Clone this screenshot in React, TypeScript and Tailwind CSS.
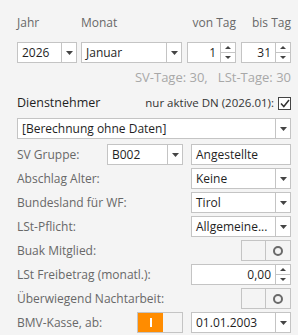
import React from "react"

const font = { fontFamily: '"Open Sans", "Noto Sans", sans-serif' }

function Arrow() {
  return (
    <svg width="7" height="4" viewBox="0 0 7 4">
      <polygon points="0,0 7,0 3.5,4" fill="#444" />
    </svg>
  )
}

function Select({ value, className = "" }: { value: string; className?: string }) {
  return (
    <div className={`flex h-[21px] border border-[#c4c4c4] bg-white ${className}`}>
      <div className="flex-1 min-w-0 truncate pl-[4px] text-[12px] leading-[19px] text-[#1f1f1f]">{value}</div>
      <div className="flex w-[15px] items-center justify-center border-l border-[#c4c4c4]">
        <Arrow />
      </div>
    </div>
  )
}

function Spin({ value, className = "" }: { value: string; className?: string }) {
  return (
    <div className={`flex h-[21px] border border-[#c4c4c4] bg-white ${className}`}>
      <div className="flex-1 pr-[4px] text-right text-[12px] leading-[19px] text-[#1f1f1f]">{value}</div>
      <div className="flex w-[15px] flex-col border-l border-[#c4c4c4]">
        <div className="flex flex-1 items-center justify-center border-b border-[#c4c4c4]">
          <svg width="6" height="3" viewBox="0 0 6 3">
            <polygon points="0,3 6,3 3,0" fill="#444" />
          </svg>
        </div>
        <div className="flex flex-1 items-center justify-center">
          <svg width="6" height="3" viewBox="0 0 6 3">
            <polygon points="0,0 6,0 3,3" fill="#444" />
          </svg>
        </div>
      </div>
    </div>
  )
}

function Toggle({ on = false }: { on?: boolean }) {
  if (on) {
    return (
      <div className="flex h-[21px] w-[46px] border border-[#c4c4c4] bg-[#f4f4f4]">
        <div className="flex w-[25px] items-center justify-center bg-[#ff8c00]">
          <div className="h-[9px] w-[2px] bg-white" />
        </div>
        <div className="flex-1" />
      </div>
    )
  }
  return (
    <div className="flex h-[21px] w-[50px] border border-[#c4c4c4] bg-[#f4f4f4]">
      <div className="w-[24px] border-r border-[#c4c4c4]" />
      <div className="flex flex-1 items-center justify-center">
        <div className="h-[10px] w-[10px] rounded-full border-2 border-[#6a6a6a]" />
      </div>
    </div>
  )
}

function Row({ label, children }: { label: string; children: React.ReactNode }) {
  return (
    <div className="mt-[3px] flex h-[21px] items-center">
      <div className="flex-1 text-[12px] text-[#686868]">{label}</div>
      {children}
    </div>
  )
}

export default function App() {
  return (
    <div className="h-[335px] w-[298px] overflow-hidden bg-[#f4f4f4] pl-[17px] pr-[7px] pt-[15px]" style={font}>
      <div className="flex h-[16px] items-center text-[12px] text-[#686868]">
        <div className="w-[64px]">Jahr</div>
        <div className="w-[106px]">Monat</div>
        <div className="w-[49px] text-right">von Tag</div>
        <div className="flex-1 text-right">bis Tag</div>
      </div>
      <div className="mt-[11px] flex h-[21px]">
        <Select value="2026" className="w-[60px]" />
        <Select value="Januar" className="ml-[4px] w-[101px]" />
        <Spin value="1" className="ml-[5px] w-[49px]" />
        <Spin value="31" className="ml-[5px] flex-1" />
      </div>
      <div className="mt-[6px] h-[16px] text-right text-[13px] leading-[16px] text-[#a8a8a8]">
        SV-Tage: 30,&nbsp;&nbsp;&nbsp;LSt-Tage: 30
      </div>
      <div className="mt-[8px] flex h-[20px] items-center">
        <div className="flex-1 text-[12.5px] text-[#1f1f1f]">Dienstnehmer</div>
        <div className="mr-[4px] text-[11.5px] text-[#333]">nur aktive DN (2026.01):</div>
        <div className="flex h-[13px] w-[13px] items-center justify-center border border-[#444] bg-white">
          <svg width="10" height="9" viewBox="0 0 10 9">
            <path d="M1 4.5 L3.8 7.5 L9 1" fill="none" stroke="#333" strokeWidth="1.5" />
          </svg>
        </div>
      </div>
      <Select value="[Berechnung ohne Daten]" className="mt-[5px]" />
      <div className="mt-[5px] flex h-[21px] items-center">
        <div className="w-[90px] text-[12px] text-[#686868]">SV Gruppe:</div>
        <Select value="B002" className="w-[76px]" />
        <div className="ml-[8px] h-[21px] flex-1 border border-[#c4c4c4] bg-white pl-[4px] text-[12px] leading-[19px] text-[#1f1f1f]">
          Angestellte
        </div>
      </div>
      <Row label="Abschlag Alter:">
        <Select value="Keine" className="w-[100px]" />
      </Row>
      <Row label="Bundesland für WF:">
        <Select value="Tirol" className="w-[100px]" />
      </Row>
      <Row label="LSt-Pflicht:">
        <Select value="Allgemeine..." className="w-[100px]" />
      </Row>
      <Row label="Buak Mitglied:">
        <Toggle />
      </Row>
      <Row label="LSt Freibetrag (monatl.):">
        <Spin value="0,00" className="w-[100px]" />
      </Row>
      <Row label="Überwiegend Nachtarbeit:">
        <Toggle />
      </Row>
      <Row label="BMV-Kasse, ab:">
        <Toggle on />
        <Select value="01.01.2003" className="ml-[8px] w-[100px]" />
      </Row>
    </div>
  )
}
